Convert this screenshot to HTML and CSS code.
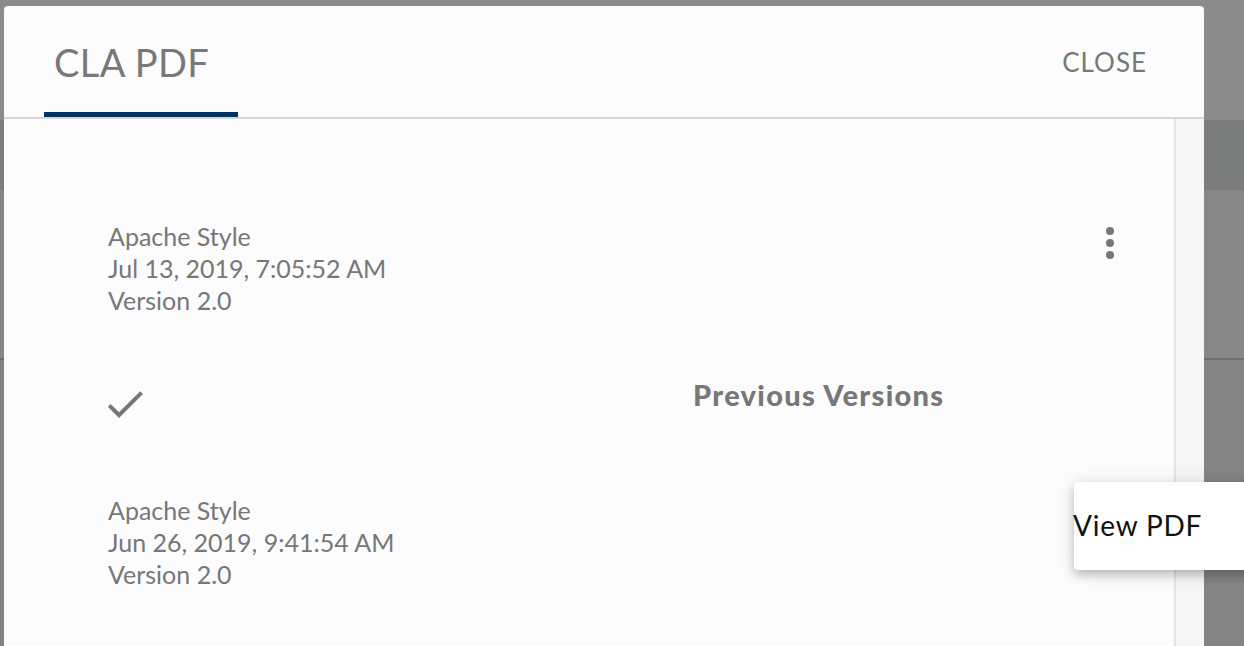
FILE: index.html
```html
<!DOCTYPE html>
<html>
<head>
<meta charset="utf-8">
<link rel="stylesheet" href="styles.css">
</head>
<body>
<div class="dialog">
  <div class="dialog-header">
    <div class="tab"><span class="tab-label">CLA PDF</span></div>
    <button class="close-btn">CLOSE</button>
  </div>
  <div class="dialog-body">
    <div class="content">
      <div class="item">
        <div class="item-text">
          <div>Apache Style</div>
          <div>Jul 13, 2019, 7:05:52 AM</div>
          <div>Version 2.0</div>
        </div>
        <svg class="kebab" viewBox="0 0 24 24" width="48" height="48"><circle cx="12" cy="6" r="2"/><circle cx="12" cy="12" r="2"/><circle cx="12" cy="18" r="2"/></svg>
      </div>
      <div class="check-row">
        <svg class="check" viewBox="0 0 24 24" width="48" height="48"><path d="M9 16.17L4.83 12l-1.42 1.41L9 19 21 7l-1.41-1.41z"/></svg>
        <div class="prev-title">Previous Versions</div>
      </div>
      <div class="item item-2">
        <div class="item-text">
          <div>Apache Style</div>
          <div>Jun 26, 2019, 9:41:54 AM</div>
          <div>Version 2.0</div>
        </div>
      </div>
    </div>
    <div class="scrollbar"></div>
  </div>
</div>
<div class="menu"><span class="menu-item">View PDF</span></div>
</body>
</html>
```
FILE: styles.css
```css
html, body {
  margin: 0;
  height: 100%;
  overflow: hidden;
}
body {
  position: relative;
  padding: 6px 0 0 4px;
  box-sizing: border-box;
  font-family: Lato, "Noto Sans", sans-serif;
  background:
    linear-gradient(to bottom, #8b8b8b 0, #8b8b8b 120px, #7b7c7c 120px, #7b7c7c 190px, #878787 190px, #878787 358px, #6f6f6f 358px, #6f6f6f 360px, #848484 360px);
}
.dialog {
  width: 1200px;
  height: 700px;
  background: #fcfcfc;
  border-radius: 4px 4px 0 0;
  display: flex;
  flex-direction: column;
}
.dialog-header {
  height: 111px;
  display: flex;
  align-items: stretch;
  justify-content: space-between;
  border-bottom: 2px solid #d6d6d6;
  padding: 0 57px 0 40px;
}
.tab {
  width: 194px;
  box-sizing: border-box;
  padding: 33px 0 0 10px;
  border-bottom: 5px solid #00335f;
}
.tab-label {
  font-size: 38px;
  color: #787878;
  line-height: 46px;
  letter-spacing: 0.4px;
  display: block;
}
.close-btn {
  border: 0;
  background: none;
  font-family: inherit;
  font-size: 26px;
  letter-spacing: 1px;
  color: #787878;
  padding: 0;
  margin-top: 1px;
  align-self: center;
  cursor: pointer;
}
.dialog-body {
  flex: 1;
  display: flex;
}
.content {
  flex: 1;
  padding-top: 101px;
}
.scrollbar {
  width: 28px;
  background: #f6f6f6;
  border-left: 2px solid #e4e4e4;
}
.item {
  display: flex;
  justify-content: space-between;
  align-items: flex-start;
  padding: 0 40px 0 104px;
}
.item-text {
  font-size: 25px;
  line-height: 32px;
  color: #777;
}
.kebab {
  fill: #777;
  margin-top: -1px;
}
.check-row {
  display: flex;
  align-items: flex-start;
  padding: 64px 0 0 97px;
  height: 114px;
}
.check {
  fill: #777;
}
.prev-title {
  margin-left: 544px;
  margin-top: -1px;
  font-size: 29px;
  font-weight: 900;
  color: #777;
  letter-spacing: 1.3px;
  line-height: 32px;
}
.menu {
  position: absolute;
  left: 1074px;
  top: 482px;
  width: 220px;
  height: 88px;
  background: #fff;
  border-radius: 4px;
  box-shadow: 0 5px 10px rgba(0,0,0,0.2), 0 2px 20px rgba(0,0,0,0.12);
  display: flex;
  align-items: center;
}
.menu-item {
  font-size: 28px;
  color: #111;
  line-height: 40px;
  letter-spacing: 0.8px;
  margin-top: -2px;
  margin-left: -1px;
}
```
